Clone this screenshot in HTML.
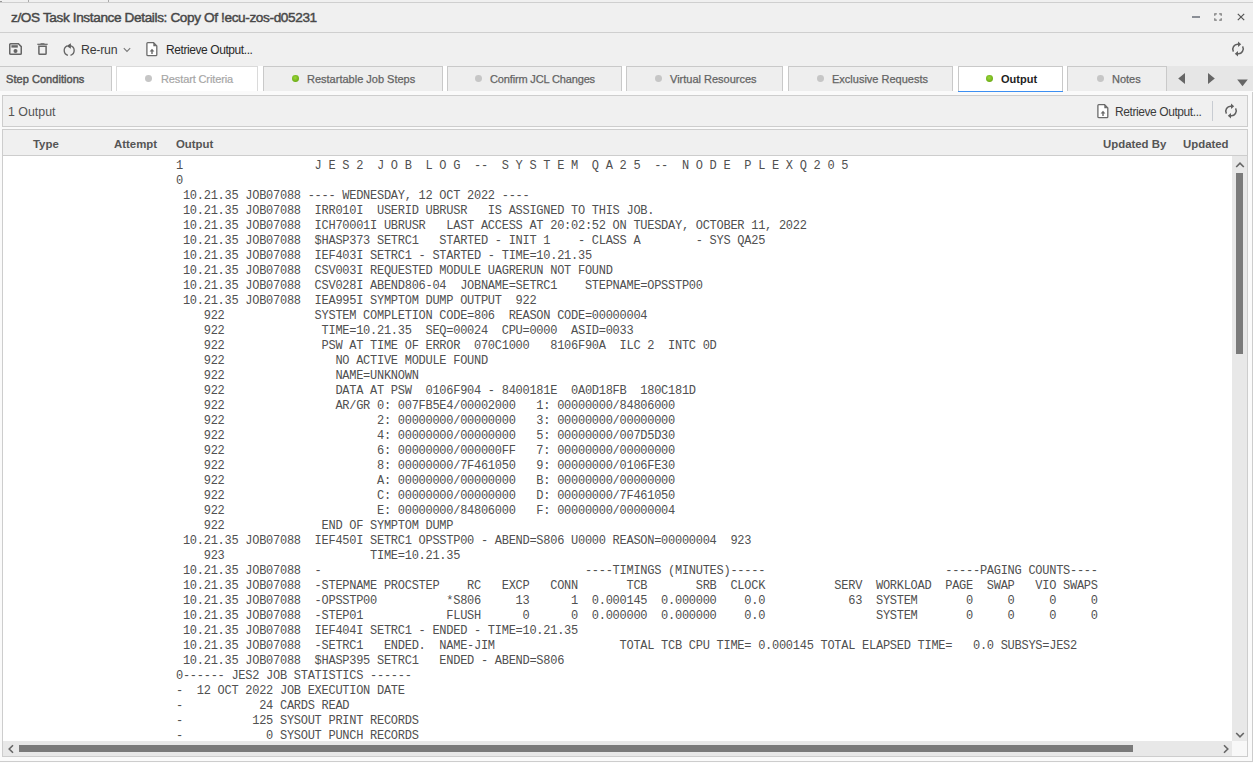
<!DOCTYPE html>
<html><head><meta charset="utf-8">
<style>
*{box-sizing:border-box}
html,body{margin:0;padding:0}
body{width:1253px;height:763px;overflow:hidden;position:relative;background:#f0f0f0;font-family:"Liberation Sans",sans-serif;color:#333}
.a{position:absolute}
.ui{font-size:12px;white-space:nowrap;line-height:14px}
.tab{position:absolute;top:66px;height:25px;background:#eeeeee;border:1px solid #c9c9c9;border-bottom:none}
.dot{position:absolute;top:74.8px;width:6.8px;height:6.8px;border-radius:50%;background:#c6c6c6}
.dot.g{background:radial-gradient(circle at 45% 40%,#9ad63a 0,#74b41c 60%,#5e9a10 100%)}
.tt{position:absolute;top:73px;font-size:11px;line-height:13px;white-space:nowrap;color:#646464;-webkit-text-stroke:0.25px #646464}
.hd{position:absolute;top:137px;font-size:11.4px;font-weight:bold;color:#555;white-space:nowrap;line-height:14px}
pre.log{position:absolute;left:176px;top:159px;margin:0;font-family:"Liberation Mono",monospace;font-size:12px;letter-spacing:-0.271px;line-height:15px;color:#505050}
</style></head><body>
<!-- top strip -->
<div class="a" style="left:0;top:0;width:1253px;height:3px;background:#f0f0f0;border-bottom:1px solid #cfcfcf"></div>
<div class="a" style="left:28px;top:0;width:1px;height:2px;background:#aaa"></div>
<div class="a" style="left:108px;top:0;width:1px;height:2px;background:#aaa"></div>
<div class="a" style="left:0;top:1px;width:2px;height:1px;background:#999"></div>
<!-- title -->
<div class="a" style="left:11px;top:9px;font-size:13.6px;letter-spacing:-0.37px;color:#484848;-webkit-text-stroke:0.45px #484848;white-space:nowrap;line-height:17px">z/OS Task Instance Details: Copy Of !ecu-zos-d05231</div>
<div class="a" style="left:0;top:32px;width:1253px;height:1px;background:#cfcfcf"></div>
<!-- window controls -->
<div class="a" style="left:1192px;top:16px;width:8px;height:2px;background:#8a8e96"></div>
<svg class="a" style="left:1213px;top:12px" width="10" height="10" viewBox="0 0 10 10"><path d="M1.8 3.8V1.8H3.8M6.2 1.8H8.2V3.8M8.2 6.2V8.2H6.2M3.8 8.2H1.8V6.2" fill="none" stroke="#777" stroke-width="1.2"/></svg>
<svg class="a" style="left:1237px;top:13px" width="8" height="8" viewBox="0 0 8 8"><path d="M0.8 0.8L7.2 7.2M7.2 0.8L0.8 7.2" fill="none" stroke="#555" stroke-width="1.2"/></svg>

<!-- toolbar -->
<svg class="a" style="left:9px;top:43px" width="13" height="12" viewBox="0 0 13 12"><path d="M1.6 0.75H9.4L12.25 3.6V10.4Q12.25 11.25 11.4 11.25H1.6Q0.75 11.25 0.75 10.4V1.6Q0.75 0.75 1.6 0.75Z" fill="none" stroke="#666" stroke-width="1.5"/><rect x="2.4" y="2.2" width="6.4" height="2.4" fill="#666"/><circle cx="6.5" cy="7.9" r="2" fill="#666"/></svg>
<svg class="a" style="left:37px;top:43px" width="11" height="13" viewBox="0 0 11 13"><path d="M0.3 1.3H10.7" stroke="#666" stroke-width="1.2"/><path d="M3.3 0.9Q3.3 0.2 4 0.2H7Q7.7 0.2 7.7 0.9" fill="#666"/><path d="M1.9 3.2H9.1V10.5Q9.1 11.3 8.3 11.3H2.7Q1.9 11.3 1.9 10.5Z" fill="none" stroke="#666" stroke-width="1.5"/></svg>
<svg class="a" style="left:62px;top:43px" width="14" height="14" viewBox="0 0 14 14"><path d="M5.9 12.3A5 5 0 0 1 5.2 2.9" fill="none" stroke="#666" stroke-width="1.35"/><path d="M8.5 12.3A5 5 0 0 0 8.2 2.6" fill="none" stroke="#666" stroke-width="1.35"/><path d="M8.9 0.3L4.5 3L8.9 5.7Z" fill="#5e5e5e"/></svg>
<div class="a ui" style="left:81px;top:43px;font-size:12.3px;color:#3a3a3a;letter-spacing:-0.2px">Re-run</div>
<svg class="a" style="left:123px;top:47px" width="8" height="6" viewBox="0 0 8 6"><path d="M0.8 1.2L4 4.4L7.2 1.2" fill="none" stroke="#777" stroke-width="1.1"/></svg>
<svg class="a" style="left:146px;top:42px" width="12" height="15" viewBox="0 0 12 15"><path d="M1.8 0.7H7.6L10.8 3.9V12.7Q10.8 13.6 9.9 13.6H1.8Q0.9 13.6 0.9 12.7V1.6Q0.9 0.7 1.8 0.7Z" fill="#fff" stroke="#6a6a6a" stroke-width="1.3"/><path d="M7.3 0.7L10.8 4.2H7.3Z" fill="#6a6a6a"/><path d="M3.6 9.6L6 6.8L8.4 9.6H6.7V12H5.3V9.6Z" fill="#6a6a6a"/></svg>
<div class="a ui" style="left:166px;top:43px;font-size:12px;color:#2a2a2a;letter-spacing:-0.42px">Retrieve Output...</div>
<svg class="a" style="left:1230px;top:41px" width="16" height="16" viewBox="0 0 16 16"><path d="M3.4 10.6A4.9 4.9 0 0 1 8.2 3.3" fill="none" stroke="#606060" stroke-width="1.5"/><path d="M8 0.6L11.2 3.3L8 6Z" fill="#606060"/><path d="M12.6 5.4A4.9 4.9 0 0 1 7.8 12.7" fill="none" stroke="#606060" stroke-width="1.5"/><path d="M8 10L4.8 12.7L8 15.4Z" fill="#606060"/></svg>

<!-- tabs -->
<div class="a" style="left:0;top:66px;width:1253px;height:25px;background:#fff"></div>
<div class="a" style="left:0;top:91px;width:1253px;height:672px;background:#fafafa"></div>
<div class="tab" style="left:-1px;width:113px"></div>
<div class="tab" style="left:116px;width:142px;background:#fff;border-color:#dadada"></div>
<div class="tab" style="left:263px;width:180px"></div>
<div class="tab" style="left:447px;width:175px"></div>
<div class="tab" style="left:626px;width:157px"></div>
<div class="tab" style="left:788px;width:165px"></div>
<div class="tab" style="left:958px;width:105px;background:#fff"></div>
<div class="a" style="left:958px;top:90.5px;width:105px;height:1.5px;background:#3d8ff2"></div>
<div class="tab" style="left:1067px;width:100px"></div>
<div class="tt" style="left:6px;color:#555;-webkit-text-stroke:0.45px #555;letter-spacing:0.05px">Step Conditions</div>
<span class="dot" style="left:145px"></span><div class="tt" style="left:161px;color:#a6a6a6;-webkit-text-stroke:0.2px #a6a6a6;letter-spacing:-0.12px">Restart Criteria</div>
<span class="dot g" style="left:292px"></span><div class="tt" style="left:307px">Restartable Job Steps</div>
<span class="dot" style="left:475px"></span><div class="tt" style="left:490px;letter-spacing:-0.15px">Confirm JCL Changes</div>
<span class="dot" style="left:655px"></span><div class="tt" style="left:670px">Virtual Resources</div>
<span class="dot" style="left:817px"></span><div class="tt" style="left:832px">Exclusive Requests</div>
<span class="dot g" style="left:986.2px"></span><div class="tt" style="left:1001px;font-weight:bold;color:#1e1e1e;-webkit-text-stroke:0">Output</div>
<span class="dot" style="left:1097px"></span><div class="tt" style="left:1112px">Notes</div>
<div class="a" style="left:1167px;top:66px;width:86px;height:25px;background:#e6e6e6"></div>
<svg class="a" style="left:1177px;top:72px" width="9" height="13" viewBox="0 0 9 13"><path d="M8 0.9V12L1.2 6.5Z" fill="#666"/></svg>
<svg class="a" style="left:1207px;top:72px" width="9" height="13" viewBox="0 0 9 13"><path d="M1 0.9V12L7.8 6.5Z" fill="#666"/></svg>
<svg class="a" style="left:1236px;top:79px" width="13" height="8" viewBox="0 0 13 8"><path d="M1.2 0.6H11.8L6.5 7.2Z" fill="#666"/></svg>

<!-- panel -->
<div class="a" style="left:2px;top:95px;width:1246px;height:32px;background:#f0f0f0;border:1px solid #cdcdcd"></div>
<div class="a ui" style="left:8px;top:105px;color:#555;font-size:12.4px">1 Output</div>
<svg class="a" style="left:1097px;top:104px" width="12" height="15" viewBox="0 0 12 15"><path d="M1.8 0.7H7.6L10.8 3.9V12.7Q10.8 13.6 9.9 13.6H1.8Q0.9 13.6 0.9 12.7V1.6Q0.9 0.7 1.8 0.7Z" fill="#fff" stroke="#6a6a6a" stroke-width="1.3"/><path d="M7.3 0.7L10.8 4.2H7.3Z" fill="#6a6a6a"/><path d="M3.6 9.6L6 6.8L8.4 9.6H6.7V12H5.3V9.6Z" fill="#6a6a6a"/></svg>
<div class="a ui" style="left:1115px;top:105px;font-size:12px;color:#3c3c3c;letter-spacing:-0.42px">Retrieve Output...</div>
<div class="a" style="left:1212px;top:101px;width:1px;height:20px;background:#c8ccd2"></div>
<svg class="a" style="left:1223px;top:103px" width="16" height="16" viewBox="0 0 16 16"><path d="M3.4 10.6A4.9 4.9 0 0 1 8.2 3.3" fill="none" stroke="#606060" stroke-width="1.5"/><path d="M8 0.6L11.2 3.3L8 6Z" fill="#606060"/><path d="M12.6 5.4A4.9 4.9 0 0 1 7.8 12.7" fill="none" stroke="#606060" stroke-width="1.5"/><path d="M8 10L4.8 12.7L8 15.4Z" fill="#606060"/></svg>

<div class="a" style="left:2px;top:129px;width:1246px;height:628px;background:#fff;border:1px solid #cdcdcd"></div>
<div class="a" style="left:3px;top:130px;width:1244px;height:26px;background:#f0f0f0;border-bottom:1px solid #cdcdcd"></div>
<div class="hd" style="left:33px">Type</div>
<div class="hd" style="left:114px">Attempt</div>
<div class="hd" style="left:176px">Output</div>
<div class="hd" style="left:1103px">Updated By</div>
<div class="hd" style="left:1183px">Updated</div>

<pre class="log">1                   J E S 2  J O B  L O G  --  S Y S T E M  Q A 2 5  --  N O D E  P L E X Q 2 0 5
0
 10.21.35 JOB07088 ---- WEDNESDAY, 12 OCT 2022 ----
 10.21.35 JOB07088  IRR010I  USERID UBRUSR   IS ASSIGNED TO THIS JOB.
 10.21.35 JOB07088  ICH70001I UBRUSR   LAST ACCESS AT 20:02:52 ON TUESDAY, OCTOBER 11, 2022
 10.21.35 JOB07088  $HASP373 SETRC1   STARTED - INIT 1    - CLASS A        - SYS QA25
 10.21.35 JOB07088  IEF403I SETRC1 - STARTED - TIME=10.21.35
 10.21.35 JOB07088  CSV003I REQUESTED MODULE UAGRERUN NOT FOUND
 10.21.35 JOB07088  CSV028I ABEND806-04  JOBNAME=SETRC1    STEPNAME=OPSSTP00
 10.21.35 JOB07088  IEA995I SYMPTOM DUMP OUTPUT  922
    922             SYSTEM COMPLETION CODE=806  REASON CODE=00000004
    922              TIME=10.21.35  SEQ=00024  CPU=0000  ASID=0033
    922              PSW AT TIME OF ERROR  070C1000   8106F90A  ILC 2  INTC 0D
    922                NO ACTIVE MODULE FOUND
    922                NAME=UNKNOWN
    922                DATA AT PSW  0106F904 - 8400181E  0A0D18FB  180C181D
    922                AR/GR 0: 007FB5E4/00002000   1: 00000000/84806000
    922                      2: 00000000/00000000   3: 00000000/00000000
    922                      4: 00000000/00000000   5: 00000000/007D5D30
    922                      6: 00000000/000000FF   7: 00000000/00000000
    922                      8: 00000000/7F461050   9: 00000000/0106FE30
    922                      A: 00000000/00000000   B: 00000000/00000000
    922                      C: 00000000/00000000   D: 00000000/7F461050
    922                      E: 00000000/84806000   F: 00000000/00000004
    922              END OF SYMPTOM DUMP
 10.21.35 JOB07088  IEF450I SETRC1 OPSSTP00 - ABEND=S806 U0000 REASON=00000004  923
    923                     TIME=10.21.35
 10.21.35 JOB07088  -                                      ----TIMINGS (MINUTES)-----                          -----PAGING COUNTS----
 10.21.35 JOB07088  -STEPNAME PROCSTEP    RC   EXCP   CONN       TCB       SRB  CLOCK          SERV  WORKLOAD  PAGE  SWAP   VIO SWAPS
 10.21.35 JOB07088  -OPSSTP00          *S806     13      1  0.000145  0.000000    0.0            63  SYSTEM       0     0     0     0
 10.21.35 JOB07088  -STEP01            FLUSH      0      0  0.000000  0.000000    0.0                SYSTEM       0     0     0     0
 10.21.35 JOB07088  IEF404I SETRC1 - ENDED - TIME=10.21.35
 10.21.35 JOB07088  -SETRC1   ENDED.  NAME-JIM                  TOTAL TCB CPU TIME= 0.000145 TOTAL ELAPSED TIME=   0.0 SUBSYS=JES2
 10.21.35 JOB07088  $HASP395 SETRC1   ENDED - ABEND=S806
0------ JES2 JOB STATISTICS ------
-  12 OCT 2022 JOB EXECUTION DATE
-           24 CARDS READ
-          125 SYSOUT PRINT RECORDS
-            0 SYSOUT PUNCH RECORDS</pre>

<!-- scrollbars -->
<div class="a" style="left:1232px;top:156px;width:15px;height:585px;background:#e8e8e8"></div>
<div class="a" style="left:1236px;top:173px;width:7px;height:181px;background:#7a7a7a"></div>
<div class="a" style="left:3px;top:741px;width:1229px;height:15px;background:#e8e8e8"></div>
<div class="a" style="left:19px;top:745px;width:1114px;height:7px;background:#7a7a7a"></div>
<div class="a" style="left:1232px;top:741px;width:15px;height:15px;background:#f8f8f8"></div>
<svg class="a" style="left:1235px;top:162px" width="10" height="6" viewBox="0 0 10 6"><path d="M1.2 5L5 1.2L8.8 5" fill="none" stroke="#666" stroke-width="1.6"/></svg>
<svg class="a" style="left:1235px;top:732px" width="10" height="6" viewBox="0 0 10 6"><path d="M1.2 1L5 4.8L8.8 1" fill="none" stroke="#666" stroke-width="1.6"/></svg>
<svg class="a" style="left:8px;top:744px" width="6" height="10" viewBox="0 0 6 10"><path d="M5 1.2L1.2 5L5 8.8" fill="none" stroke="#666" stroke-width="1.6"/></svg>
<svg class="a" style="left:1223px;top:744px" width="6" height="10" viewBox="0 0 6 10"><path d="M1 1.2L4.8 5L1 8.8" fill="none" stroke="#666" stroke-width="1.6"/></svg>
<div class="a" style="left:0;top:761px;width:1253px;height:1px;background:#cdcdcd"></div>
<div class="a" style="left:0;top:762px;width:1253px;height:1px;background:#fdfdfd"></div>
<div class="a" style="left:1252px;top:92px;width:1px;height:670px;background:#cdcdcd"></div>
</body></html>
